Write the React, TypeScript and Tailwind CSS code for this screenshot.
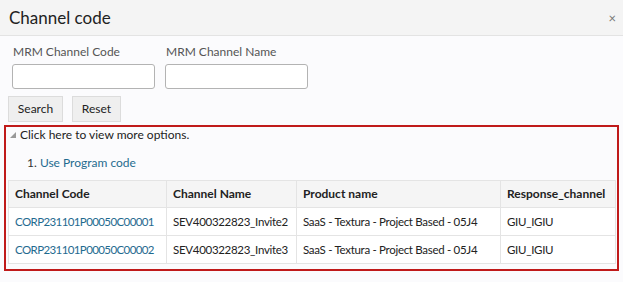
import React from "react";

interface ChannelRow {
    code: string;
    name: string;
    product: string;
    response: string;
}

const rows: ChannelRow[] = [
    { code: "CORP231101P00050C00001", name: "SEV400322823_Invite2", product: "SaaS - Textura - Project Based - 05J4", response: "GIU_IGIU" },
    { code: "CORP231101P00050C00002", name: "SEV400322823_Invite3", product: "SaaS - Textura - Project Based - 05J4", response: "GIU_IGIU" },
];

const App = (): JSX.Element => {
    return (
        <div className="w-[623px] h-[282px] bg-[#fbfbfd] text-[#333] font-['Lato',sans-serif] overflow-hidden">
            <header className="h-[36px] bg-[#f4f4f4] border-b border-[#e3e3e3] flex items-center justify-between pl-[9px] pr-[7px]">
                <h1 className="text-[17px] text-[#222] leading-none">Channel code</h1>
                <span className="text-[13px] text-[#777] leading-none pt-[2px]">×</span>
            </header>
            <section className="px-[12px] pt-[9px] flex gap-[10px]">
                <label className="flex flex-col w-[143px]">
                    <span className="text-[12px] text-[#555] pl-px h-[19px] leading-[14px]">MRM Channel Code</span>
                    <input className="h-[25px] border border-[#b3b3b3] rounded-[3px] bg-white" />
                </label>
                <label className="flex flex-col w-[143px]">
                    <span className="text-[12px] text-[#555] pl-px h-[19px] leading-[14px]">MRM Channel Name</span>
                    <input className="h-[25px] border border-[#b3b3b3] rounded-[3px] bg-white" />
                </label>
            </section>
            <div className="px-[8px] pt-[7px] flex gap-[9px]">
                <button className="w-[55px] h-[26px] bg-[#efefef] border border-[#dcdcdc] text-[12px] text-[#222]">Search</button>
                <button className="w-[49px] h-[26px] bg-[#efefef] border border-[#dcdcdc] text-[12px] text-[#222]">Reset</button>
            </div>
            <section className="mx-[4px] mt-[3px] border-2 border-[#c01a1a] pt-[1px] pb-[5px] px-[2px]">
                <p className="flex items-center gap-[3px] text-[12px] text-[#222] pl-[1px] h-[14px]">
                    <svg width="8" height="8" viewBox="0 0 8 8"><path d="M7 1 L7 7 L1 7 Z" fill="#999" /></svg>
                    Click here to view more options.
                </p>
                <p className="text-[12px] text-[#333] pl-[19px] mt-[14px] h-[14px] leading-[14px]">
                    1. <a className="text-[#1f6b8f]">Use Program code</a>
                </p>
                <table className="mt-[10px] w-[607px] border-collapse text-[12px] table-fixed">
                    <colgroup>
                        <col className="w-[158px]" />
                        <col className="w-[130px]" />
                        <col className="w-[204px]" />
                        <col className="w-[115px]" />
                    </colgroup>
                    <thead>
                        <tr className="h-[27px] bg-[#f5f5f5]">
                            <th className="border border-[#e4e4e4] text-left font-bold text-[#222] px-[6px]">Channel Code</th>
                            <th className="border border-[#e4e4e4] text-left font-bold text-[#222] px-[6px]">Channel Name</th>
                            <th className="border border-[#e4e4e4] text-left font-bold text-[#222] px-[6px]">Product name</th>
                            <th className="border border-[#e4e4e4] text-left font-bold text-[#222] px-[6px]">Response_channel</th>
                        </tr>
                    </thead>
                    <tbody className="bg-white text-[11.5px] tracking-[-0.3px] whitespace-nowrap">
                        {rows.map((row) => (
                            <tr key={row.code} className="h-[28px]">
                                <td className="border border-[#e4e4e4] px-[6px] text-[#1f6b8f] tracking-[-0.6px]">{row.code}</td>
                                <td className="border border-[#e4e4e4] px-[6px] text-[#222]">{row.name}</td>
                                <td className="border border-[#e4e4e4] px-[6px] text-[#222]">{row.product}</td>
                                <td className="border border-[#e4e4e4] px-[6px] text-[#222]">{row.response}</td>
                            </tr>
                        ))}
                    </tbody>
                </table>
            </section>
        </div>
    );
};

export default App;
